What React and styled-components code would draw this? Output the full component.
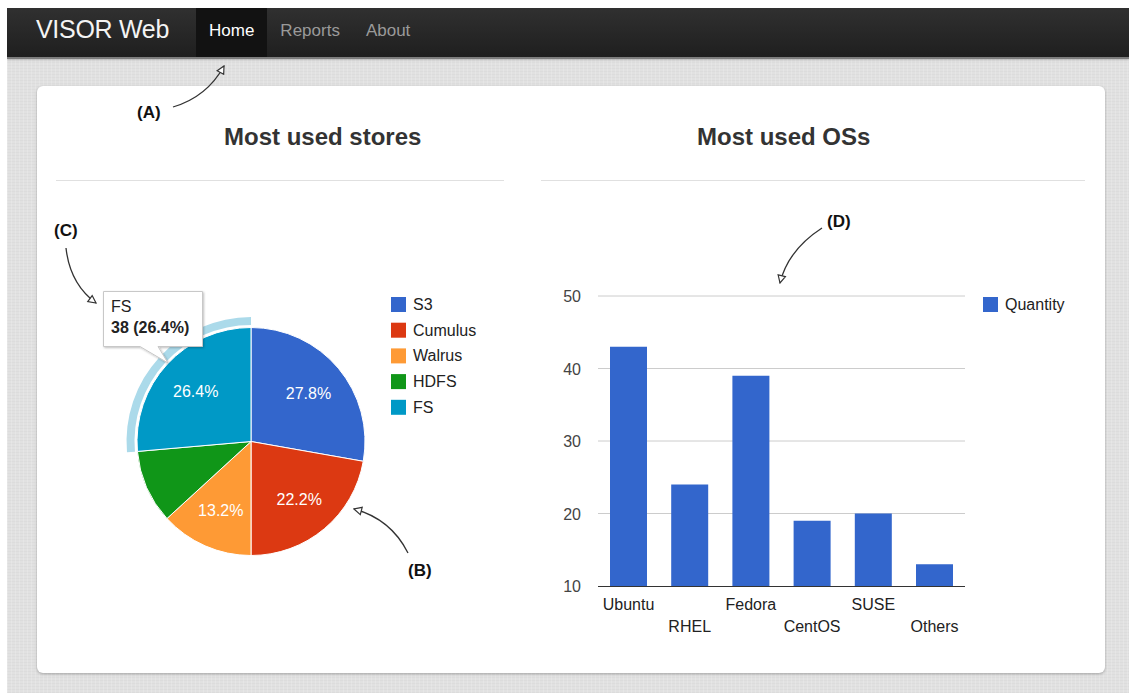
import React from "react";
import styled, { createGlobalStyle } from "styled-components";

const GlobalStyle = createGlobalStyle`
  html { background: #fff; }
  body {
    margin: 8px 0 0 7px;
    font-family: "Liberation Sans", Arial, Helvetica, sans-serif;
  }
  * { box-sizing: border-box; }
`;

const Page = styled.div`
  position: relative;
  min-height: 685px;
  background-color: #e1e1e1;
  background-image:
    repeating-linear-gradient(90deg, rgba(255,255,255,0.18) 0 1px, transparent 1px 4px),
    repeating-linear-gradient(0deg, rgba(0,0,0,0.025) 0 1px, transparent 1px 3px);
`;

const NavBar = styled.nav`
  display: flex;
  align-items: stretch;
  height: 51px;
  background: linear-gradient(#303030, #1f1f1f);
  border-bottom: 2px solid #7d7d7d;
  box-shadow: 0 1px 2px rgba(0, 0, 0, 0.18);
`;

const Brand = styled.div`
  display: flex;
  align-items: center;
  margin: 0 27px 0 29px;
  padding-bottom: 7px;
  font-size: 25px;
  letter-spacing: -0.3px;
  color: #f4f4f4;
`;

const NavLink = styled.a`
  display: flex;
  align-items: center;
  padding: 0 13px 4px;
  font-size: 17px;
  color: ${(p) => (p.$active ? "#ffffff" : "#9a9a9a")};
  background: ${(p) => (p.$active ? "#121212" : "transparent")};
  text-decoration: none;
`;

const Main = styled.main`
  padding: 27px 24px 20px 30px;
`;

const Card = styled.section`
  display: grid;
  grid-template-columns: 448px 544px;
  column-gap: 37px;
  width: 1068px;
  height: 587px;
  padding: 0 20px 0 19px;
  background: #fff;
  border-radius: 6px;
  box-shadow: 0 1px 3px rgba(0, 0, 0, 0.28);
`;

const Column = styled.div`
  display: flex;
  flex-direction: column;
`;

const ChartHeader = styled.header`
  display: flex;
  justify-content: flex-start;
  height: 95px;
  padding-top: 37px;
  padding-left: ${(p) => p.$indent}px;
  border-bottom: 1px solid #e0e0e0;
`;

const Title = styled.h2`
  margin: 0;
  font-size: 24px;
  line-height: 28px;
  font-weight: bold;
  color: #333;
`;

const ChartSvg = styled.svg`
  display: block;
  overflow: visible;
  font-family: "Liberation Sans", Arial, sans-serif;
`;

const Overlay = styled.svg`
  position: absolute;
  left: -7px;
  top: -8px;
  pointer-events: none;
  font-family: "Liberation Sans", Arial, sans-serif;
`;

/* ---------- pie chart ---------- */

const stores = [
  { name: "S3", value: 40, color: "#3366cc" },
  { name: "Cumulus", value: 32, color: "#dc3912" },
  { name: "Walrus", value: 19, color: "#fe9a35" },
  { name: "HDFS", value: 15, color: "#109618" },
  { name: "FS", value: 38, color: "#0099c6" },
];
const pctLabels = ["27.8%", "22.2%", "13.2%", null, "26.4%"];

const CX = 251;
const CY = 441.5;
const R = 114;

const pt = (deg, r) => {
  const a = (deg * Math.PI) / 180;
  return [CX + r * Math.sin(a), CY - r * Math.cos(a)];
};

const slicePath = (a0, a1, r) => {
  const [x0, y0] = pt(a0, r);
  const [x1, y1] = pt(a1, r);
  const large = a1 - a0 > 180 ? 1 : 0;
  return `M${CX},${CY} L${x0},${y0} A${r},${r} 0 ${large} 1 ${x1},${y1} Z`;
};

const ringPath = (a0, a1, r0, r1) => {
  const [ax, ay] = pt(a0, r1);
  const [bx, by] = pt(a1, r1);
  const [cx, cy] = pt(a1, r0);
  const [dx, dy] = pt(a0, r0);
  const large = a1 - a0 > 180 ? 1 : 0;
  return `M${ax},${ay} A${r1},${r1} 0 ${large} 1 ${bx},${by} L${cx},${cy} A${r0},${r0} 0 ${large} 0 ${dx},${dy} Z`;
};

function StoresChart() {
  const total = stores.reduce((s, d) => s + d.value, 0);
  let acc = 0;
  const arcs = stores.map((d, i) => {
    const a0 = (acc / total) * 360;
    acc += d.value;
    const a1 = (acc / total) * 360;
    return { ...d, a0, a1, label: pctLabels[i] };
  });
  const fs = arcs[4];

  return (
    <ChartSvg width="448" height="492" viewBox="56 181 448 492">
      <defs>
        <filter id="tipShadow" x="-20%" y="-20%" width="140%" height="150%">
          <feDropShadow dx="1" dy="1" stdDeviation="1.2" floodColor="#000" floodOpacity="0.25" />
        </filter>
      </defs>
      <path d={ringPath(fs.a0, fs.a1, 116.5, 124.5)} fill="#abdaea" />
      {arcs.map((a) => (
        <path key={a.name} d={slicePath(a.a0, a.a1, R)} fill={a.color} stroke="#fff" strokeWidth="1" />
      ))}
      {arcs.map((a) => {
        if (!a.label) return null;
        const [x, y] = pt((a.a0 + a.a1) / 2, 75);
        return (
          <text key={a.name} x={x} y={y + 6} fill="#fff" fontSize="16" textAnchor="middle">
            {a.label}
          </text>
        );
      })}

      {stores.map((d, i) => (
        <g key={d.name}>
          <rect x="391" y={297 + i * 25.7} width="15" height="15" fill={d.color} />
          <text x="413" y={310 + i * 25.7} fontSize="16" fill="#222">
            {d.name}
          </text>
        </g>
      ))}

      <g filter="url(#tipShadow)">
        <path
          d="M103.5,291.5 H202.5 V346.5 H158 L168,363 L140,346.5 H103.5 Z"
          fill="#fff"
          stroke="#c8c8c8"
          strokeWidth="1"
        />
      </g>
      <text x="111" y="312" fontSize="16" fill="#222">FS</text>
      <text x="111" y="333" fontSize="16" fontWeight="bold" fill="#222">38 (26.4%)</text>
    </ChartSvg>
  );
}

/* ---------- bar chart ---------- */

const osData = [
  { name: "Ubuntu", value: 43 },
  { name: "RHEL", value: 24 },
  { name: "Fedora", value: 39 },
  { name: "CentOS", value: 19 },
  { name: "SUSE", value: 20 },
  { name: "Others", value: 13 },
];

const BASE_Y = 586;
const UNIT = 7.25;
const yOf = (v) => BASE_Y - (v - 10) * UNIT;

function OsChart() {
  return (
    <ChartSvg width="544" height="492" viewBox="541 181 544 492">
      {[50, 40, 30, 20].map((t) => (
        <line key={t} x1="598" x2="965" y1={yOf(t)} y2={yOf(t)} stroke="#cccccc" strokeWidth="1" />
      ))}
      {[50, 40, 30, 20, 10].map((t) => (
        <text key={t} x="581" y={yOf(t) + 6} fontSize="16" fill="#444" textAnchor="end">
          {t}
        </text>
      ))}
      {osData.map((d, i) => {
        const x = 610 + i * 61.2;
        return (
          <g key={d.name}>
            <rect x={x} y={yOf(d.value)} width="37" height={BASE_Y - yOf(d.value)} fill="#3366cc" />
            <text x={x + 18.5} y={i % 2 === 0 ? 610 : 632} fontSize="16" fill="#222" textAnchor="middle">
              {d.name}
            </text>
          </g>
        );
      })}
      <line x1="598" x2="965" y1={BASE_Y + 0.5} y2={BASE_Y + 0.5} stroke="#333" strokeWidth="1" />
      <rect x="983" y="297" width="15" height="15" fill="#3366cc" />
      <text x="1005" y="310" fontSize="16" fill="#222">Quantity</text>
    </ChartSvg>
  );
}

/* ---------- hand-drawn call-outs ---------- */

function Callouts() {
  const line = { fill: "none", stroke: "#333", strokeWidth: 1.3, markerEnd: "url(#openHead)" };
  const label = { fontSize: 17, fontWeight: "bold", fill: "#111" };
  return (
    <Overlay width="1129" height="693" viewBox="0 0 1129 693">
      <defs>
        <marker
          id="openHead"
          viewBox="0 0 12 12"
          refX="10.5"
          refY="6"
          markerWidth="10"
          markerHeight="10"
          markerUnits="userSpaceOnUse"
          orient="auto"
        >
          <path d="M1.5,1.5 L10.5,6 L1.5,10.5 Z" fill="#fff" stroke="#333" strokeWidth="1.4" />
        </marker>
      </defs>
      <path d="M173,107 Q207,97 224,66" {...line} />
      <text x="137" y="118" {...label}>(A)</text>

      <path d="M408,553 Q391,519 354,509" {...line} />
      <text x="408" y="576" {...label}>(B)</text>

      <path d="M66,248 Q70,284 96,303" {...line} />
      <text x="54" y="236" {...label}>(C)</text>

      <path d="M822,228 Q788,250 780,283" {...line} />
      <text x="827" y="227" {...label}>(D)</text>
    </Overlay>
  );
}

export default function App() {
  return (
    <>
      <GlobalStyle />
      <Page>
        <NavBar>
          <Brand>VISOR Web</Brand>
          <NavLink href="#" $active>Home</NavLink>
          <NavLink href="#">Reports</NavLink>
          <NavLink href="#">About</NavLink>
        </NavBar>
        <Main>
          <Card>
            <Column>
              <ChartHeader $indent={168}>
                <Title>Most used stores</Title>
              </ChartHeader>
              <StoresChart />
            </Column>
            <Column>
              <ChartHeader $indent={156}>
                <Title>Most used OSs</Title>
              </ChartHeader>
              <OsChart />
            </Column>
          </Card>
        </Main>
        <Callouts />
      </Page>
    </>
  );
}
